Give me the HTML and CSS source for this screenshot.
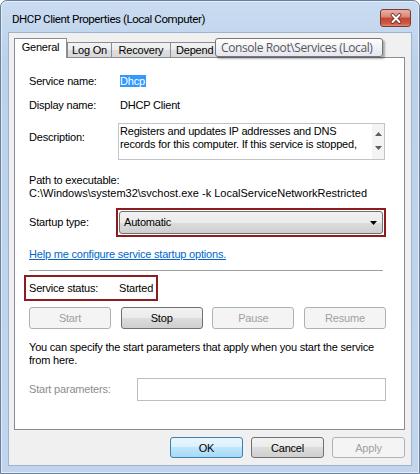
FILE: index.html
```html
<!DOCTYPE html>
<html lang="en">

<head>
    <meta charset="UTF-8">
    <meta name="viewport" content="width=device-width, initial-scale=1.0">
    <title>DHCP Client Properties (Local Computer)</title>
    <link rel="stylesheet" href="styles.css">
</head>

<body>
    <div class="window">
        <div class="titlebar">
            <span class="title">DHCP Client Properties (Local Computer)</span>
            <span class="close-btn">
                <svg width="14" height="11" viewBox="0 0 14 11">
                    <path d="M3.5 2 L10.5 9 M10.5 2 L3.5 9" stroke="#6b2323" stroke-width="3.6" stroke-linecap="round"/>
                    <path d="M3.5 2 L10.5 9 M10.5 2 L3.5 9" stroke="#fff" stroke-width="2" stroke-linecap="round"/>
                </svg>
            </span>
        </div>

        <div class="client">
            <div class="tabs">
                <span class="tab tab-active">General</span>
                <span class="tab tab-logon">Log On</span>
                <span class="tab tab-recovery">Recovery</span>
                <span class="tab tab-deps">Depend</span>
            </div>

            <div class="panel">
                <div class="field">
                    <span class="label">Service name:</span>
                    <span class="value"><span class="selected">Dhcp</span></span>
                </div>
                <div class="field field-gap">
                    <span class="label">Display name:</span>
                    <span class="value">DHCP Client</span>
                </div>
                <div class="field field-gap field-top">
                    <span class="label label-desc">Description:</span>
                    <div class="desc-box">
                        <div class="desc-text">Registers and updates IP addresses and DNS<br>records for this computer. If this service is stopped,</div>
                        <div class="scrollbar">
                            <svg width="7" height="4" viewBox="0 0 7 4"><path d="M0 4 L3.5 0 L7 4 Z" fill="#5e5e5e"/></svg>
                            <svg width="7" height="4" viewBox="0 0 7 4"><path d="M0 0 L3.5 4 L7 0 Z" fill="#5e5e5e"/></svg>
                        </div>
                    </div>
                </div>

                <div class="path-label">Path to executable:</div>
                <div class="path">C:\Windows\system32\svchost.exe -k LocalServiceNetworkRestricted</div>

                <div class="field startup-row">
                    <span class="label">Startup type:</span>
                    <div class="mark mark-combo">
                        <div class="combo">
                            <span>Automatic</span>
                            <svg width="7" height="4" viewBox="0 0 7 4"><path d="M0 0 L3.5 4 L7 0 Z" fill="#000"/></svg>
                        </div>
                    </div>
                </div>

                <a class="link" href="#">Help me configure service startup options.</a>

                <div class="separator"></div>

                <div class="mark mark-status">
                    <span class="status-label">Service status:</span>
                    <span>Started</span>
                </div>

                <div class="service-buttons">
                    <span class="button button-disabled">Start</span>
                    <span class="button">Stop</span>
                    <span class="button button-disabled">Pause</span>
                    <span class="button button-disabled">Resume</span>
                </div>

                <p class="note">You can specify the start parameters that apply when you start the service<br>from here.</p>

                <div class="field params-row">
                    <span class="params-label">Start parameters:</span>
                    <span class="params-input"></span>
                </div>
            </div>

            <div class="dialog-buttons">
                <span class="button button-default">OK</span>
                <span class="button">Cancel</span>
                <span class="button button-disabled">Apply</span>
            </div>
        </div>

        <div class="tooltip">Console Root\Services (Local)</div>
    </div>
</body>

</html>
```

FILE: styles.css
```css
body {
    margin: 0;
    background-color: #fff;
    font-family: 'Liberation Sans', Arial, sans-serif;
    font-size: 11px;
    letter-spacing: -0.2px;
    color: #000;
}

.window {
    position: relative;
    width: 420px;
    height: 474px;
    box-sizing: border-box;
    display: flex;
    flex-direction: column;
    padding: 0 7px 7px 7px;
    border: 1px solid #66809e;
    border-radius: 7px 7px 0 0;
    background: linear-gradient(#cadcf1, #bcd2eb 60px, #c1d6ee);
    box-shadow: inset 0 0 0 1px rgba(255, 255, 255, 0.55);
}

.titlebar {
    height: 31px;
    flex: none;
    display: flex;
    justify-content: space-between;
    align-items: flex-start;
    margin: 0 -7px;
    padding: 0 8px 0 11px;
}

.title {
    margin-top: 9px;
    line-height: 18px;
    font-family: Roboto, sans-serif;
    font-size: 11.5px;
    letter-spacing: -0.45px;
}

.close-btn {
    margin-top: 8px;
    width: 31px;
    height: 18px;
    box-sizing: border-box;
    display: flex;
    align-items: center;
    justify-content: center;
    border: 1px solid #7a3a35;
    border-radius: 3px;
    background: linear-gradient(#eab1a4, #d78373 45%, #c5432f 50%, #cf5a45 85%, #e08a73);
}

.client {
    flex: 1;
    display: flex;
    flex-direction: column;
    padding: 5px 6px 0 5px;
    border: 1px solid #9fb4cc;
    background-color: #f0f0f0;
}

/* tabs */
.tabs {
    display: flex;
    align-items: flex-end;
    height: 20px;
    margin-bottom: -1px;
    position: relative;
    z-index: 1;
}

.tab {
    height: 16px;
    box-sizing: border-box;
    border: 1px solid #898c95;
    line-height: 14px;
    text-align: center;
    background: linear-gradient(#f3f3f3, #ebebeb 50%, #dedede 50%, #d8d8d8);
}

.tab + .tab {
    border-left: none;
}

.tab-active {
    width: 53px;
    height: 20px;
    line-height: 17px;
    padding-bottom: 2px;
    border-bottom: none;
    background: #fff;
}

.tab-logon {
    width: 45px;
    border-left: 1px solid #898c95 !important;
}

.tab-recovery {
    width: 59px;
}

.tab-deps {
    width: 70px;
    text-align: left;
    padding-left: 5px;
}

/* general page */
.panel {
    height: 373px;
    box-sizing: border-box;
    padding: 17px 18px 0 14px;
    border: 1px solid #898c95;
    background-color: #fff;
}

.field {
    display: flex;
    align-items: center;
    line-height: 13px;
}

.field-gap {
    margin-top: 11px;
}

.field-top {
    align-items: flex-start;
}

.label {
    width: 89px;
    flex: none;
}

.label-desc {
    padding-top: 8px;
}

.value {
    padding-left: 2px;
}

.selected {
    display: inline-block;
    line-height: 12px;
    padding: 0 1px 0 0;
    background-color: #3399ff;
    color: #fff;
}

.desc-box {
    width: 267px;
    height: 37px;
    box-sizing: border-box;
    display: flex;
    border: 1px solid #c2c4c8;
    background-color: #fff;
}

.desc-text {
    flex: 1;
    padding: 1px 0 0 1px;
    white-space: nowrap;
    overflow: hidden;
}

.scrollbar {
    width: 12px;
    display: flex;
    flex-direction: column;
    justify-content: space-between;
    align-items: center;
    padding: 8px 0 9px;
    background-color: #f4f4f4;
}

.path-label {
    margin-top: 14px;
    line-height: 13px;
}

.path {
    line-height: 13px;
    white-space: nowrap;
    letter-spacing: 0;
}

.startup-row {
    margin-top: 8px;
}

.mark {
    box-sizing: border-box;
    border: 2px solid #8c1c20;
}

.mark-combo {
    width: 270px;
    margin-left: -2px;
    padding: 1px;
}

.combo {
    height: 23px;
    box-sizing: border-box;
    display: flex;
    align-items: center;
    justify-content: space-between;
    padding: 0 5px 0 4px;
    border: 1px solid #707070;
    border-radius: 3px;
    background: linear-gradient(#f2f2f2, #ebebeb 50%, #dddddd 50%, #cfcfcf);
}

.link {
    display: block;
    margin-top: 11px;
    line-height: 13px;
    color: #0066cc;
    width: max-content;
}

.separator {
    margin: 9px 3px 0 0;
    border-top: 1px solid #a0a0a0;
}

.mark-status {
    width: 134px;
    height: 26px;
    margin: 4px 0 0 -5px;
    padding-left: 3px;
    display: flex;
    align-items: center;
}

.status-label {
    width: 90px;
}

/* buttons */
.button {
    height: 21px;
    box-sizing: border-box;
    display: flex;
    align-items: center;
    justify-content: center;
    border: 1px solid #707070;
    border-radius: 3px;
    background: linear-gradient(#f2f2f2, #ebebeb 50%, #dddddd 50%, #cfcfcf);
}

.button-disabled {
    border-color: #adb2b5;
    background: #f4f4f4;
    color: #a0a0a0;
}

.button-default {
    border-color: #3c7fb1;
    background: linear-gradient(#eaf6fd, #d9f0fc 50%, #bee6fd 50%, #a7d9f5);
}

.service-buttons {
    display: flex;
    justify-content: space-between;
    margin-top: 6px;
}

.service-buttons .button {
    width: 82px;
    height: 22px;
}

.note {
    margin: 12px 0 0;
    line-height: 13px;
    white-space: nowrap;
}

.params-row {
    margin-top: 11px;
}

.params-label {
    width: 108px;
    flex: none;
    color: #8d8d8d;
}

.params-input {
    width: 249px;
    height: 23px;
    box-sizing: border-box;
    border: 1px solid #bdbdbd;
    background-color: #fff;
}

.dialog-buttons {
    display: flex;
    justify-content: flex-end;
    gap: 8px;
    margin-top: 7px;
}

.dialog-buttons .button {
    width: 73px;
}

/* tooltip over the tab strip */
.tooltip {
    position: absolute;
    left: 214px;
    top: 37px;
    z-index: 2;
    width: 168px;
    height: 19px;
    box-sizing: border-box;
    padding-left: 5px;
    border: 1px solid #767676;
    border-radius: 3px;
    background: linear-gradient(#fff, #e4e5f0);
    box-shadow: 2px 2px 2px rgba(0, 0, 0, 0.3);
    font-family: 'Open Sans', sans-serif;
    font-size: 12px;
    letter-spacing: -0.4px;
    line-height: 17px;
    color: #575757;
    white-space: nowrap;
}
```
